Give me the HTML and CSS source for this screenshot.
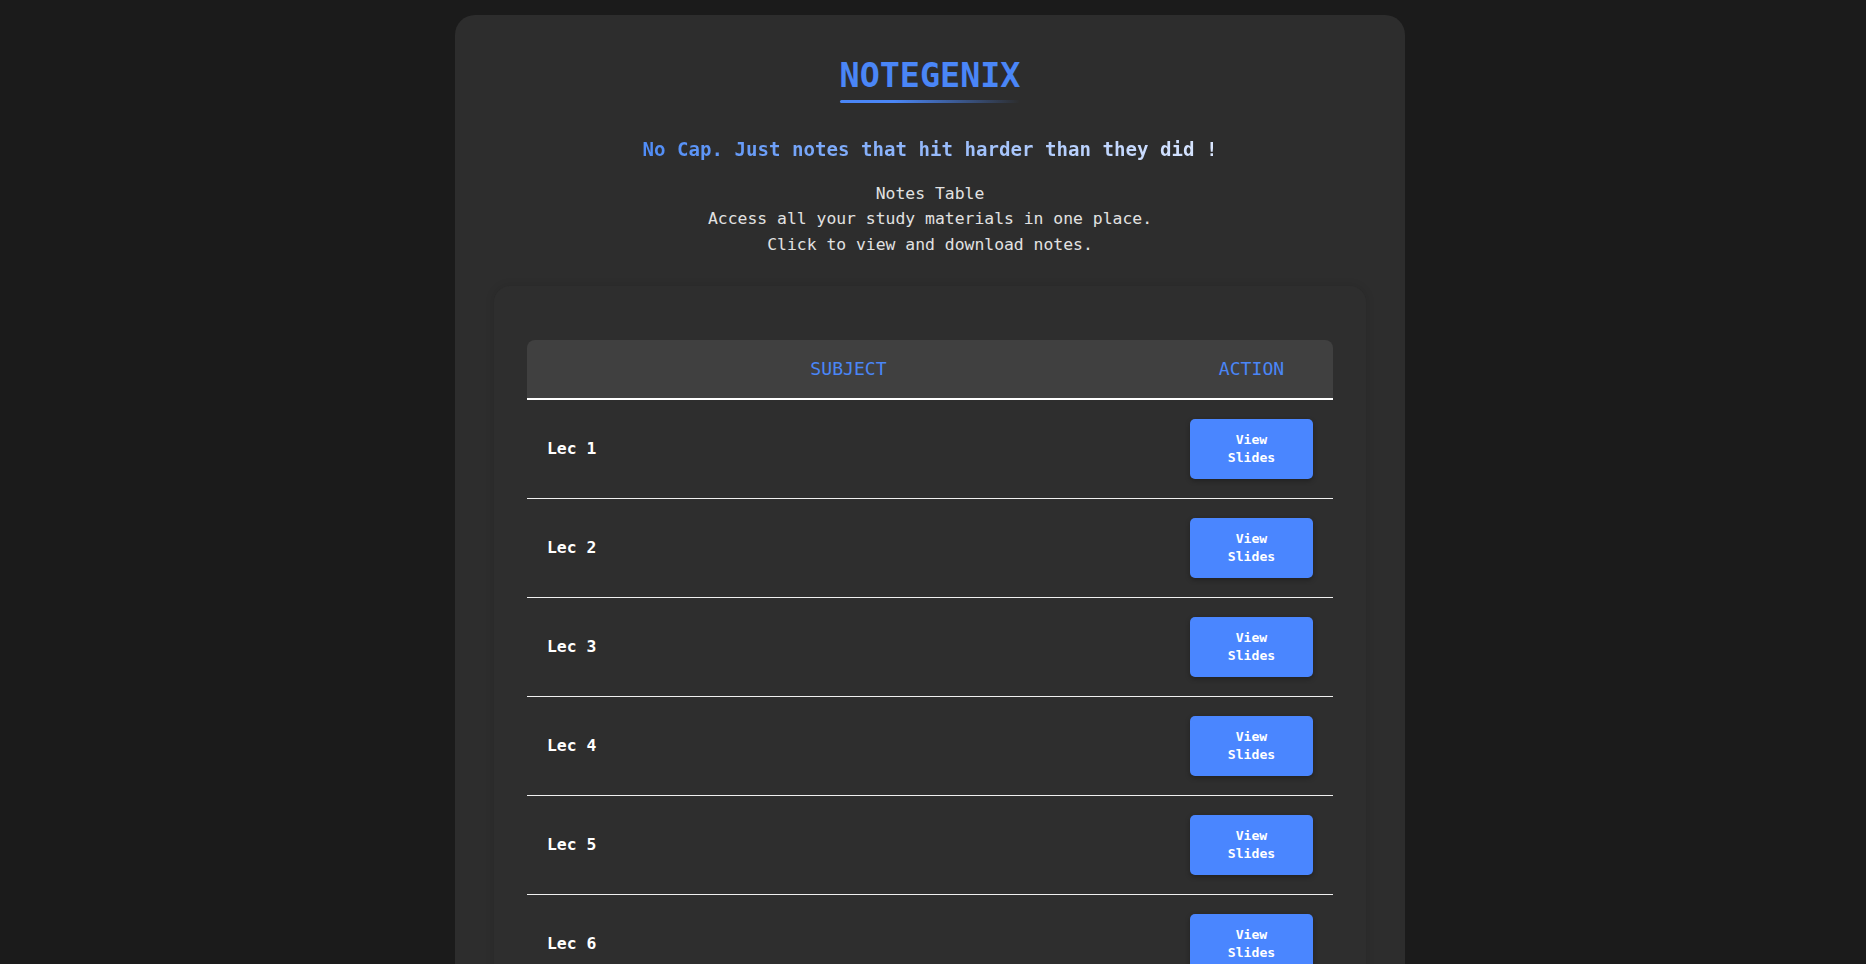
FILE: index.html
```html
<!DOCTYPE html>
<html>
<head>
<meta charset="utf-8">
<title>NoteGenix</title>
<link rel="stylesheet" href="styles.css">
</head>
<body>
	<div class="wrap">
		<header class="top">
			<h1 class="logo">NOTEGENIX</h1>
			<p class="tagline">No Cap. Just notes that hit harder than they did !</p>
			<p class="intro">Notes Table<br>Access all your study materials in one place.<br>Click to view and download notes.</p>
		</header>
		<div class="card">
			<table class="notes">
				<thead>
					<tr><th class="subj">SUBJECT</th><th class="act">ACTION</th></tr>
				</thead>
				<tbody>
					<tr><td>Lec 1</td><td class="act"><a class="btn" href="#">View Slides</a></td></tr>
					<tr><td>Lec 2</td><td class="act"><a class="btn" href="#">View Slides</a></td></tr>
					<tr><td>Lec 3</td><td class="act"><a class="btn" href="#">View Slides</a></td></tr>
					<tr><td>Lec 4</td><td class="act"><a class="btn" href="#">View Slides</a></td></tr>
					<tr><td>Lec 5</td><td class="act"><a class="btn" href="#">View Slides</a></td></tr>
					<tr><td>Lec 6</td><td class="act"><a class="btn" href="#">View Slides</a></td></tr>
					<tr><td>Lec 7</td><td class="act"><a class="btn" href="#">View Slides</a></td></tr>
					<tr><td>Lec 8</td><td class="act"><a class="btn" href="#">View Slides</a></td></tr>
					<tr><td>Lec 9</td><td class="act"><a class="btn" href="#">View Slides</a></td></tr>
					<tr><td>Lec 10</td><td class="act"><a class="btn" href="#">View Slides</a></td></tr>
					<tr><td>Lec 11</td><td class="act"><a class="btn" href="#">View Slides</a></td></tr>
					<tr><td>Lec 12</td><td class="act"><a class="btn" href="#">View Slides</a></td></tr>
					<tr><td>Lec 13</td><td class="act"><a class="btn" href="#">View Slides</a></td></tr>
					<tr><td>Lec 14</td><td class="act"><a class="btn" href="#">View Slides</a></td></tr>
					<tr><td>Lec 15</td><td class="act"><a class="btn" href="#">View Slides</a></td></tr>
					<tr><td>Lec 16</td><td class="act"><a class="btn" href="#">View Slides</a></td></tr>
					<tr><td>Lec 17</td><td class="act"><a class="btn" href="#">View Slides</a></td></tr>
				</tbody>
			</table>
		</div>
	</div>
</body>
</html>
```

FILE: styles.css
```css
html, body{
	margin:0;
	background:#1b1b1b;
	font:16.4px/1.6 "DejaVu Sans Mono", monospace;
	color:#e0e0e0;
}
::-webkit-scrollbar{width:6px;}
::-webkit-scrollbar-track{background:#2d2d2d;}
::-webkit-scrollbar-thumb{background:#a5a5a5;}

.wrap{
	width:950px;
	box-sizing:border-box;
	margin:15px auto 15px calc(50% - 478px);
	padding:41px 39px 40px;
	background:#2d2d2d;
	border-radius:20px;
}
.top{text-align:center;}
.logo{
	width:fit-content;
	margin:0 auto;
	font-size:33.4px;
	line-height:39.6px;
	font-weight:bold;
	color:#4a86f7;
}
.logo:after{
	content:"";
	display:block;
	height:3px;
	margin-top:4px;
	border-radius:2px;
	background:linear-gradient(90deg, #4a86f7 0%, #4a86f7 30%, rgba(74,134,247,0) 100%);
}
.tagline{
	width:fit-content;
	margin:35px auto 0;
	font-size:19.1px;
	line-height:23px;
	font-weight:bold;
	background:linear-gradient(90deg, #4f8cf7, #dbe7ff);
	-webkit-background-clip:text;
	background-clip:text;
	color:transparent;
}
.intro{
	margin:20px 0 0;
	line-height:25.6px;
	color:#e2e2e2;
}

.card{
	margin-top:29px;
	padding:54px 33px 33px;
	background:#2e2e2e;
	border-radius:16px;
	box-shadow:0 0 10px rgba(0,0,0,0.12);
}
.notes{
	width:100%;
	border-collapse:separate;
	border-spacing:0;
}
.notes th{
	background:#404040;
	color:#4a86f7;
	font-size:18.1px;
	line-height:22px;
	font-weight:normal;
	padding:18px 16px;
	text-align:center;
	border-bottom:2px solid #fff;
}
.notes th.subj{border-top-left-radius:8px;}
.notes th.act{border-top-right-radius:8px;}
.notes .act{width:20%; text-align:center;}
.notes td{
	padding:19px 20px;
	border-bottom:1px solid #f0f0f0;
	vertical-align:middle;
	color:#fff;
	font-weight:bold;
}
.btn{
	display:inline-block;
	box-sizing:border-box;
	width:123px;
	padding:12px 28px;
	background:#4a86ff;
	color:#fff;
	font-size:13.1px;
	line-height:18px;
	font-weight:bold;
	text-decoration:none;
	border-radius:5px;
	box-shadow:0 2px 5px rgba(0,0,0,0.3);
	vertical-align:middle;
}
```
